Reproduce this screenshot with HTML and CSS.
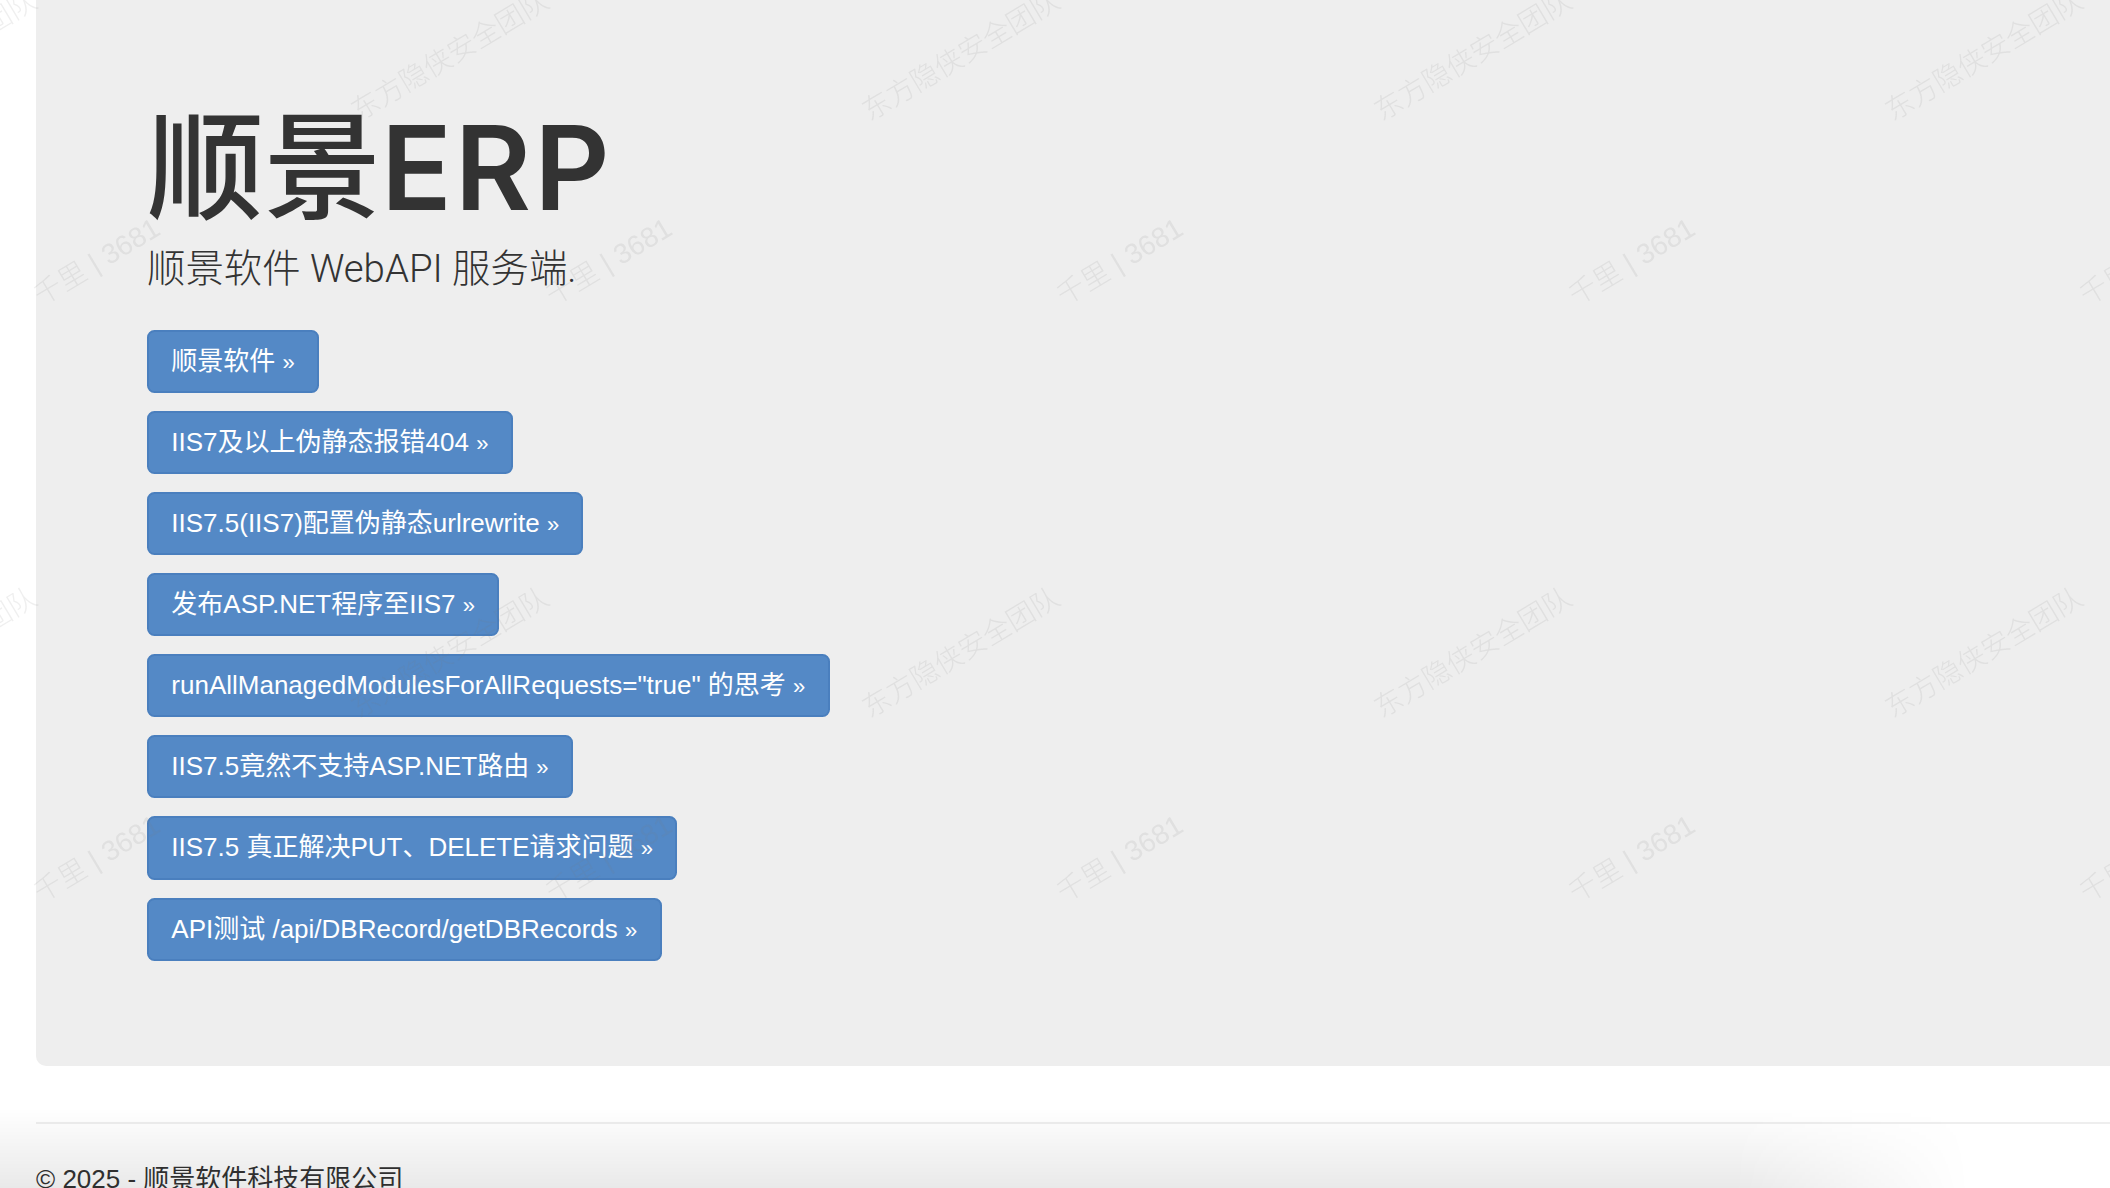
FILE: index.html
```html
<!DOCTYPE html>
<html lang="zh-CN">
<head>
<meta charset="utf-8">
<title>顺景ERP</title>
<link rel="stylesheet" href="styles.css">
</head>
<body>
<div class="container">
  <div class="jumbotron">
    <h1 class="title">顺景<span class="erp">ERP</span></h1>
    <p class="lead">顺景软件 WebAPI 服务端.</p>
    <div class="links">
      <a class="btn" href="#">顺景软件 <span class="raquo">»</span></a>
      <a class="btn" href="#">IIS7及以上伪静态报错404 <span class="raquo">»</span></a>
      <a class="btn" href="#">IIS7.5(IIS7)配置伪静态urlrewrite <span class="raquo">»</span></a>
      <a class="btn" href="#">发布ASP.NET程序至IIS7 <span class="raquo">»</span></a>
      <a class="btn" href="#">runAllManagedModulesForAllRequests="true" 的思考 <span class="raquo">»</span></a>
      <a class="btn" href="#">IIS7.5竟然不支持ASP.NET路由 <span class="raquo">»</span></a>
      <a class="btn" href="#">IIS7.5 真正解决PUT、DELETE请求问题 <span class="raquo">»</span></a>
      <a class="btn" href="#">API测试 /api/DBRecord/getDBRecords <span class="raquo">»</span></a>
    </div>
  </div>
  <hr class="rule">
  <footer class="footer">
    <p>© 2025 - 顺景软件科技有限公司</p>
  </footer>
</div>

<div class="bottom-fade"></div>

<div class="watermarks" aria-hidden="true">
  <div class="wm-grid">
    <div class="tile"><span class="wm wm-a">东方隐侠安全团队</span><span class="wm wm-b">千里 | 3681</span></div>
    <div class="tile"><span class="wm wm-a">东方隐侠安全团队</span><span class="wm wm-b">千里 | 3681</span></div>
    <div class="tile"><span class="wm wm-a">东方隐侠安全团队</span><span class="wm wm-b">千里 | 3681</span></div>
    <div class="tile"><span class="wm wm-a">东方隐侠安全团队</span><span class="wm wm-b">千里 | 3681</span></div>
    <div class="tile"><span class="wm wm-a">东方隐侠安全团队</span><span class="wm wm-b">千里 | 3681</span></div>
    <div class="tile"><span class="wm wm-a">东方隐侠安全团队</span><span class="wm wm-b">千里 | 3681</span></div>
    <div class="tile"><span class="wm wm-a">东方隐侠安全团队</span><span class="wm wm-b">千里 | 3681</span></div>
    <div class="tile"><span class="wm wm-a">东方隐侠安全团队</span><span class="wm wm-b">千里 | 3681</span></div>
    <div class="tile"><span class="wm wm-a">东方隐侠安全团队</span><span class="wm wm-b">千里 | 3681</span></div>
    <div class="tile"><span class="wm wm-a">东方隐侠安全团队</span><span class="wm wm-b">千里 | 3681</span></div>
    <div class="tile"><span class="wm wm-a">东方隐侠安全团队</span><span class="wm wm-b">千里 | 3681</span></div>
    <div class="tile"><span class="wm wm-a">东方隐侠安全团队</span><span class="wm wm-b">千里 | 3681</span></div>
  </div>
</div>
</body>
</html>
```

FILE: styles.css
```css
html {
  overflow: hidden;
}

body {
  margin: 0;
  background: #ffffff;
  color: #333333;
  font-family: "Liberation Sans", "Noto Sans CJK SC", sans-serif;
  font-size: 26px;
  line-height: 1.42857;
}

.container {
  padding-left: 36px;
}

.jumbotron {
  background: #eeeeee;
  border-radius: 0 0 0 10px;
  padding: 104px 111px 105px 111px;
  margin-bottom: 56px;
}

.title {
  margin: 0 0 8px 0;
  font-family: "Inter", "Noto Sans CJK SC", sans-serif;
  font-size: 117px;
  font-weight: 500;
  line-height: 1.1;
  color: #333333;
}

.erp {
  font-weight: 600;
  letter-spacing: 3px;
}

.lead {
  margin: 0;
  font-family: "Roboto", "Noto Sans CJK SC", sans-serif;
  font-size: 38.4px;
  font-weight: 300;
  line-height: 55.7px;
  color: #333333;
}

.links {
  display: flex;
  flex-direction: column;
  align-items: flex-start;
  gap: 18px;
  margin-top: 33.5px;
}

.btn {
  display: inline-block;
  padding: 11px 22.3px;
  border: 2px solid #4a7fbe;
  border-radius: 7.4px;
  background: #5489c6;
  color: #ffffff;
  font-size: 26px;
  line-height: 37.1px;
  text-decoration: none;
  white-space: nowrap;
}

.raquo {
  font-size: 22px;
  line-height: 1;
}

.rule {
  margin: 0 0 37px 0;
  border: 0;
  border-top: 2px solid #eeeeee;
  height: 0;
}

.footer p {
  margin: 0;
  font-size: 26px;
  line-height: 37.1px;
  color: #333333;
}

.bottom-fade {
  position: fixed;
  left: 0;
  bottom: 0;
  width: 1970px;
  height: 80px;
  background: linear-gradient(to bottom, rgba(0, 0, 0, 0), rgba(0, 0, 0, 0.085));
  -webkit-mask-image: linear-gradient(to right, #000 0%, #000 88%, transparent 100%);
  mask-image: linear-gradient(to right, #000 0%, #000 88%, transparent 100%);
  pointer-events: none;
}

.watermarks {
  position: fixed;
  inset: 0;
  overflow: hidden;
  pointer-events: none;
}

.wm-grid {
  display: grid;
  grid-template-columns: repeat(6, 511.5px);
  grid-auto-rows: 596.5px;
  margin: -150px 0 0 -300px;
}

.tile {
  position: relative;
}

.wm {
  position: absolute;
  white-space: nowrap;
  font-family: "Liberation Sans", "Noto Sans CJK SC", sans-serif;
  font-size: 28px;
  font-weight: 300;
  line-height: 1;
  color: rgba(120, 120, 120, 0.12);
  transform: translate(-50%, -50%) rotate(-31deg);
}

.wm-a {
  left: 238px;
  top: 206px;
}

.wm-b {
  left: 397px;
  top: 412px;
}
```
